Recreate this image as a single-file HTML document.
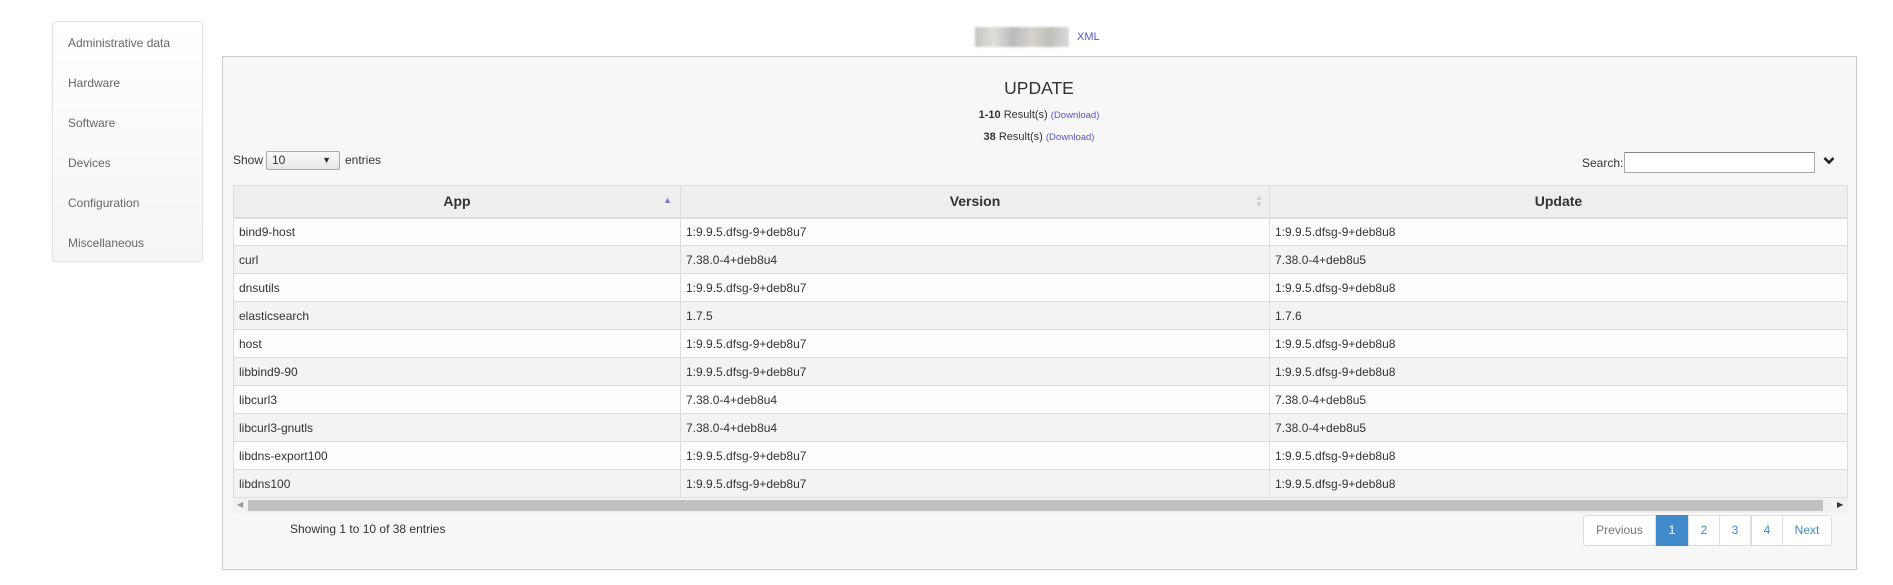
<!DOCTYPE html>
<html><head><meta charset="utf-8"><style>
*{box-sizing:border-box;margin:0;padding:0}
body{width:1893px;height:585px;background:#fff;font-family:"Liberation Sans",sans-serif;color:#333;position:relative;overflow:hidden}
.abs{position:absolute}
.side{left:52px;top:21px;width:151px;height:241px;border:1px solid #e3e3e3;border-radius:4px;background:linear-gradient(#fff,#f5f5f5);box-shadow:0 1px 2px rgba(0,0,0,.05)}
.side div{position:absolute;left:15px;font-size:12px;color:#666;line-height:16px}
.panel{left:222px;top:56px;width:1635px;height:514px;background:#f7f7f7;border:1px solid #ccc}
table{position:absolute;left:233px;top:185px;width:1615px;border-collapse:collapse;font-size:12px}
th{height:32px;background:#eee;border:1px solid #ddd;border-bottom:2px solid #ddd;font-weight:bold;font-size:14px;color:#333}
td{height:28px;border:1px solid #ddd;border-top:none;padding-left:5px;color:#333}
tr.o td{background:#fdfdfd}tr.e td{background:#f3f3f3}
.pg{top:515px;height:31px;border:1px solid #ddd;background:#fff;color:#428bca;font-size:12px;text-align:center;line-height:29px}
</style></head><body>
<div class="abs side">
<div style="top:13px">Administrative data</div>
<div style="top:53px">Hardware</div>
<div style="top:93px">Software</div>
<div style="top:133px">Devices</div>
<div style="top:173px">Configuration</div>
<div style="top:213px">Miscellaneous</div>
</div>
<div class="abs" style="left:975px;top:27px;width:94px;height:20px;background:linear-gradient(90deg,#b8b8b0,#d8d8d0,#aaa,#ccc8c0,#b0b0a8,#d0d0d0);filter:blur(1px);opacity:.8"></div>
<div class="abs" style="left:1077px;top:31px;font-size:11px;color:#55c">XML</div>
<div class="abs panel"></div>
<div class="abs" style="left:0;width:2078px;top:78px;text-align:center;font-size:17.5px;color:#333">UPDATE</div>
<div class="abs" style="left:0;width:2078px;top:109px;text-align:center;font-size:11px"><b>1-10</b> Result(s) <span style="color:#55c;font-size:9.5px">(Download)</span></div>
<div class="abs" style="left:0;width:2078px;top:131px;text-align:center;font-size:11px"><b>38</b> Result(s) <span style="color:#55c;font-size:9.5px">(Download)</span></div>
<div class="abs" style="left:233px;top:153px;font-size:12px">Show</div>
<div class="abs" style="left:266px;top:151px;width:74px;height:19px;border:1px solid #aaa;border-radius:2px;background:linear-gradient(#fafafa,#e6e6e6);font-size:12px;padding-left:5px;line-height:17px">10<span style="position:absolute;right:8px;font-size:9px">▼</span></div>
<div class="abs" style="left:345px;top:153px;font-size:12px">entries</div>
<div class="abs" style="left:1582px;top:156px;font-size:12px">Search:</div>
<div class="abs" style="left:1624px;top:152px;width:191px;height:21px;border:1px solid #aaa;border-top-color:#888;background:#fff"></div>
<svg class="abs" style="left:1823px;top:156px" width="12" height="9" viewBox="0 0 12 9"><path d="M1.5 2 L6 6.5 L10.5 2" stroke="#222" stroke-width="2.6" fill="none"/></svg>
<table>
<tr><th style="width:447px;position:relative">App<span style="position:absolute;right:8px;top:9px;color:#77c;font-size:9px">▲</span></th><th style="width:589px;position:relative">Version<span style="position:absolute;right:6px;top:8px;color:#ccc;font-size:8px;line-height:7px">▲<br>▼</span></th><th>Update</th></tr>
<tr class="o"><td>bind9-host</td><td>1:9.9.5.dfsg-9+deb8u7</td><td>1:9.9.5.dfsg-9+deb8u8</td></tr>
<tr class="e"><td>curl</td><td>7.38.0-4+deb8u4</td><td>7.38.0-4+deb8u5</td></tr>
<tr class="o"><td>dnsutils</td><td>1:9.9.5.dfsg-9+deb8u7</td><td>1:9.9.5.dfsg-9+deb8u8</td></tr>
<tr class="e"><td>elasticsearch</td><td>1.7.5</td><td>1.7.6</td></tr>
<tr class="o"><td>host</td><td>1:9.9.5.dfsg-9+deb8u7</td><td>1:9.9.5.dfsg-9+deb8u8</td></tr>
<tr class="e"><td>libbind9-90</td><td>1:9.9.5.dfsg-9+deb8u7</td><td>1:9.9.5.dfsg-9+deb8u8</td></tr>
<tr class="o"><td>libcurl3</td><td>7.38.0-4+deb8u4</td><td>7.38.0-4+deb8u5</td></tr>
<tr class="e"><td>libcurl3-gnutls</td><td>7.38.0-4+deb8u4</td><td>7.38.0-4+deb8u5</td></tr>
<tr class="o"><td>libdns-export100</td><td>1:9.9.5.dfsg-9+deb8u7</td><td>1:9.9.5.dfsg-9+deb8u8</td></tr>
<tr class="e"><td>libdns100</td><td>1:9.9.5.dfsg-9+deb8u7</td><td>1:9.9.5.dfsg-9+deb8u8</td></tr>
</table>
<div class="abs" style="left:233px;top:498px;width:1615px;height:15px;background:#f1f1f1"></div>
<div class="abs" style="left:248px;top:500px;width:1575px;height:11px;background:#c1c1c1"></div>
<div class="abs" style="left:237px;top:500px;font-size:8px;color:#999">◀</div>
<div class="abs" style="left:1837px;top:500px;font-size:8px;color:#333">▶</div>
<div class="abs" style="left:290px;top:522px;font-size:12px">Showing 1 to 10 of 38 entries</div>
<div class="abs pg" style="left:1583px;width:73px;color:#777;border-radius:3px 0 0 3px">Previous</div>
<div class="abs pg" style="left:1656px;width:32px;background:#428bca;border-color:#428bca;color:#fff">1</div>
<div class="abs pg" style="left:1688px;width:32px">2</div>
<div class="abs pg" style="left:1719px;width:32px">3</div>
<div class="abs pg" style="left:1751px;width:32px">4</div>
<div class="abs pg" style="left:1782px;width:50px;border-radius:0 3px 3px 0">Next</div>
</body></html>
